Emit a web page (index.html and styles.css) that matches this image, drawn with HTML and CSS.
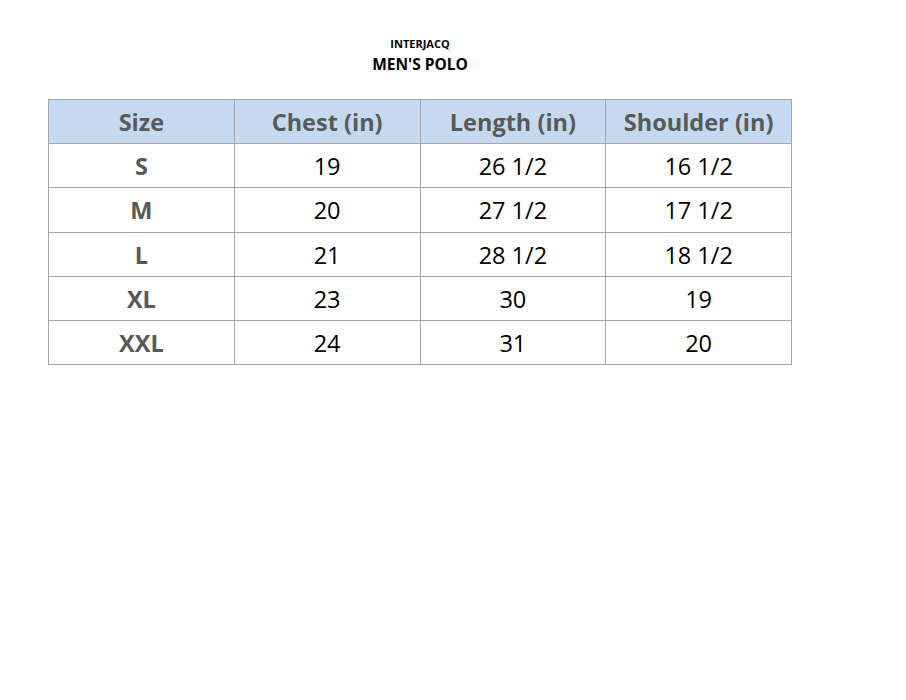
FILE: index.html
```html
<!DOCTYPE html>
<html>
<head>
<meta charset="utf-8">
<link rel="stylesheet" href="styles.css">
</head>
<body>
<div class="page">
  <div class="titles">
    <div class="brand">INTERJACQ</div>
    <div class="product">MEN'S POLO</div>
  </div>
  <table class="chart">
    <thead>
      <tr><th>Size</th><th>Chest (in)</th><th>Length (in)</th><th>Shoulder (in)</th></tr>
    </thead>
    <tbody>
      <tr><td class="size">S</td><td>19</td><td>26 1/2</td><td>16 1/2</td></tr>
      <tr class="tall"><td class="size">M</td><td>20</td><td>27 1/2</td><td>17 1/2</td></tr>
      <tr><td class="size">L</td><td>21</td><td>28 1/2</td><td>18 1/2</td></tr>
      <tr><td class="size">XL</td><td>23</td><td>30</td><td>19</td></tr>
      <tr><td class="size">XXL</td><td>24</td><td>31</td><td>20</td></tr>
    </tbody>
  </table>
</div>
</body>
</html>
```
FILE: styles.css
```css
html, body {
  margin: 0;
  padding: 0;
  background: #ffffff;
}
body {
  font-family: "Open Sans", "Liberation Sans", sans-serif;
}
.page {
  padding: 36px 0 0 48px;
}
.titles {
  width: 744px;
  text-align: center;
  font-weight: 700;
  color: #000;
}
.brand {
  font-size: 11px;
  line-height: 15px;
}
.product {
  font-size: 15.5px;
  line-height: 22px;
  margin-top: 2px;
}
.chart {
  margin-top: 24px;
  border-collapse: collapse;
  width: 744px;
  table-layout: fixed;
}
.chart th, .chart td {
  border: 1px solid #a6a6a6;
  height: 43px;
  padding: 0;
  text-align: center;
  vertical-align: middle;
  font-size: 23.5px;
}
.chart tr.tall td {
  height: 44px;
}
.chart th {
  background: #c5d9f1;
  color: #595959;
  font-weight: 700;
}
.chart td {
  color: #000;
  font-weight: 400;
}
.chart td.size {
  color: #595959;
  font-weight: 700;
}
```
